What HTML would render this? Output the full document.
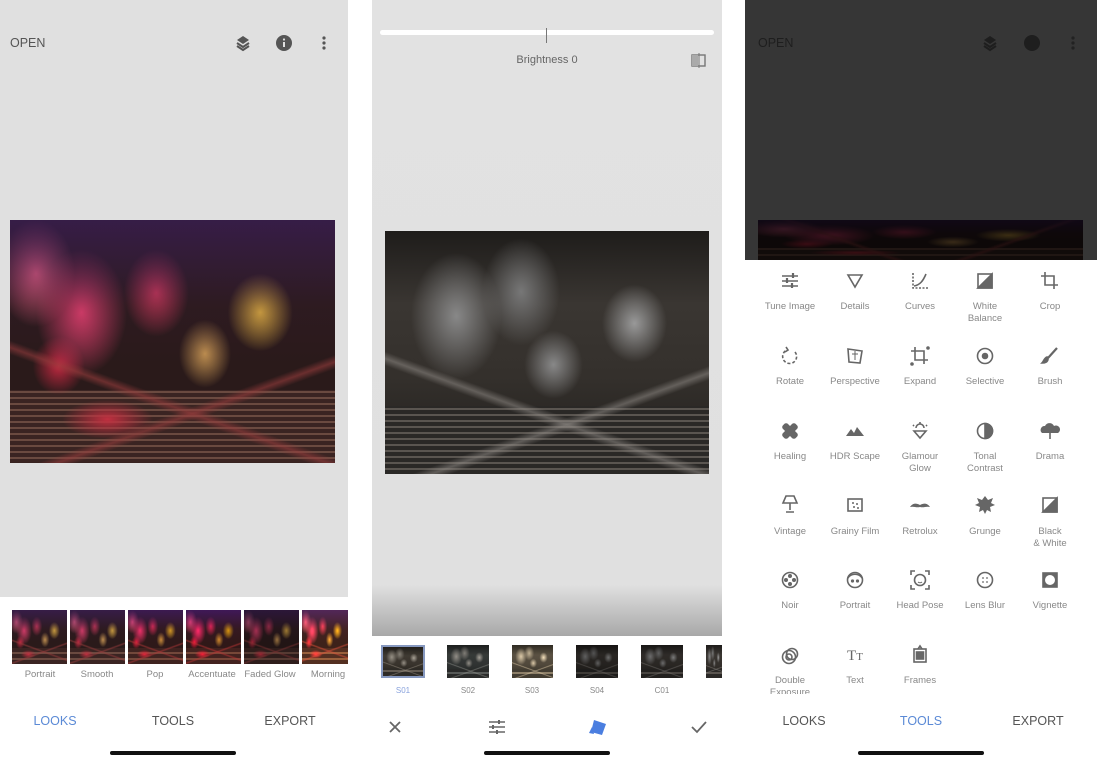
<!DOCTYPE html>
<html><head><meta charset="utf-8"><style>
*{margin:0;padding:0;box-sizing:border-box}
body{width:1097px;height:776px;background:#fff;position:relative;overflow:hidden;font-family:"Liberation Sans",sans-serif;color:#666}
.a{position:absolute}
.t{position:absolute;transform:translateX(-50%);white-space:nowrap;text-align:center}
.nav{font-size:12.5px;top:714px;color:#555}
.bar{position:absolute;height:4px;background:#111;border-radius:2px;top:751px}
.lbl{font-size:9.5px;color:#888;line-height:12px}
.photo{background:
 linear-gradient(160deg,rgba(0,0,0,0) 70%,rgba(150,60,60,.6) 72%,rgba(0,0,0,0) 74%),
 linear-gradient(20deg,rgba(0,0,0,0) 30%,rgba(150,60,60,.6) 32%,rgba(0,0,0,0) 34%),
 radial-gradient(ellipse 14% 26% at 22% 38%,#e8406e 0%,rgba(232,64,110,0) 100%),
 radial-gradient(ellipse 12% 22% at 8% 22%,#f06080 0%,rgba(240,96,128,0) 100%),
 radial-gradient(ellipse 10% 18% at 45% 30%,#d03858 0%,rgba(208,56,88,0) 100%),
 radial-gradient(ellipse 8% 12% at 15% 60%,#c02840 0%,rgba(192,40,64,0) 100%),
 radial-gradient(ellipse 10% 16% at 77% 38%,#e0b040 0%,rgba(224,176,64,0) 100%),
 radial-gradient(ellipse 8% 14% at 60% 55%,#c09050 0%,rgba(192,144,80,0) 100%),
 radial-gradient(ellipse 14% 8% at 30% 82%,#c03040 0%,rgba(192,48,64,0) 100%),
 repeating-linear-gradient(0deg,#3a2422 0 4px,#6a4a40 4px 6px),
 #2a1a1a;
 background-size:auto,auto,auto,auto,auto,auto,auto,auto,auto,100% 30%,auto;
 background-position:0 0,0 0,0 0,0 0,0 0,0 0,0 0,0 0,0 0,0 100%,0 0;
 background-repeat:no-repeat}
.photo::before{content:"";position:absolute;inset:0;background:linear-gradient(180deg,rgba(60,30,90,.7) 0%,rgba(60,30,60,.2) 35%,rgba(0,0,0,0) 60%)}
.bw{background:
 linear-gradient(160deg,rgba(0,0,0,0) 70%,rgba(150,145,140,.5) 72%,rgba(0,0,0,0) 74%),
 linear-gradient(20deg,rgba(0,0,0,0) 30%,rgba(150,145,140,.5) 32%,rgba(0,0,0,0) 34%),
 radial-gradient(ellipse 14% 26% at 22% 35%,#888 0%,rgba(136,136,136,0) 100%),
 radial-gradient(ellipse 12% 22% at 42% 25%,#777 0%,rgba(119,119,119,0) 100%),
 radial-gradient(ellipse 10% 16% at 77% 38%,#999 0%,rgba(153,153,153,0) 100%),
 radial-gradient(ellipse 9% 14% at 52% 55%,#888 0%,rgba(136,136,136,0) 100%),
 repeating-linear-gradient(0deg,#2a2826 0 4px,#5a5550 4px 6px),
 linear-gradient(180deg,#1e1c1a 0%,#3a3632 30%,#34302c 60%,#1e1c1a 100%);
 background-size:auto,auto,auto,auto,auto,auto,100% 28%,auto;
 background-position:0 0,0 0,0 0,0 0,0 0,0 0,0 100%,0 0;
 background-repeat:no-repeat}
</style></head><body>

<!-- PANEL 1 -->
<div class="a" style="left:0;top:0;width:348px;height:597px;background:#e0e0e0"></div>
<div class="a" style="left:10px;top:36px;font-size:12.5px;color:#555">OPEN</div>
<svg class="a" style="left:234px;top:34px" width="18" height="18" viewBox="0 0 18 18"><path d="M9 2l6 4-6 4-6-4z" fill="#555"/><path d="M3 9l6 4 6-4M3 12l6 4 6-4" stroke="#555" stroke-width="2" fill="none"/></svg>
<svg class="a" style="left:275px;top:34px" width="18" height="18"><circle cx="9" cy="9" r="8" fill="#555"/><rect x="8" y="8" width="2" height="5" fill="#e0e0e0"/><circle cx="9" cy="5.5" r="1.1" fill="#e0e0e0"/></svg>
<svg class="a" style="left:320px;top:35px" width="8" height="16"><circle cx="4" cy="3" r="1.6" fill="#555"/><circle cx="4" cy="8" r="1.6" fill="#555"/><circle cx="4" cy="13" r="1.6" fill="#555"/></svg>
<div class="a photo" style="left:10px;top:220px;width:325px;height:243px"></div>
<div class="a photo" style="left:12px;top:610px;width:55px;height:54px"></div>
<div class="a photo" style="left:70px;top:610px;width:55px;height:54px"></div>
<div class="a photo" style="left:128px;top:610px;width:55px;height:54px;filter:saturate(1.3)"></div>
<div class="a photo" style="left:186px;top:610px;width:55px;height:54px;filter:saturate(1.5)"></div>
<div class="a photo" style="left:244px;top:610px;width:55px;height:54px;filter:brightness(.8)"></div>
<div class="a photo" style="left:302px;top:610px;width:46px;height:54px;filter:sepia(.4) saturate(2) brightness(1.2)"></div>
<div class="t lbl" style="left:40px;top:669px">Portrait</div>
<div class="t lbl" style="left:97px;top:669px">Smooth</div>
<div class="t lbl" style="left:155px;top:669px">Pop</div>
<div class="t lbl" style="left:212px;top:669px">Accentuate</div>
<div class="t lbl" style="left:270px;top:669px">Faded Glow</div>
<div class="t lbl" style="left:328px;top:669px">Morning</div>
<div class="t nav" style="left:55px;color:#5b8ad6">LOOKS</div>
<div class="t nav" style="left:173px">TOOLS</div>
<div class="t nav" style="left:290px">EXPORT</div>
<div class="bar" style="left:110px;width:126px"></div>

<!-- PANEL 2 -->
<div class="a" style="left:372px;top:0;width:350px;height:636px;background:linear-gradient(180deg,#e2e2e2 0%,#e0e0e0 92%,#a8a8a8 100%)"></div>
<div class="a" style="left:380px;top:30px;width:334px;height:5px;background:#fff;border-radius:3px"></div>
<div class="a" style="left:546px;top:28px;width:1px;height:15px;background:#777"></div>
<div class="t" style="left:547px;top:54px;font-size:11px;color:#666">Brightness 0</div>
<svg class="a" style="left:690px;top:53px" width="18" height="15"><rect x="2" y="2" width="13" height="11" fill="none" stroke="#777" stroke-width="1.4"/><rect x="2" y="2" width="6" height="11" fill="#aaa"/><line x1="9" y1="0" x2="9" y2="15" stroke="#777"/></svg>
<div class="a bw" style="left:385px;top:231px;width:324px;height:243px"></div>
<div class="a bw" style="left:381px;top:645px;width:44px;height:33px;border:2px solid #6d8fd8;filter:sepia(.3)"></div>
<div class="a bw" style="left:447px;top:645px;width:42px;height:33px;filter:hue-rotate(160deg) sepia(.2)"></div>
<div class="a bw" style="left:512px;top:645px;width:41px;height:33px;filter:sepia(.7) brightness(1.3)"></div>
<div class="a bw" style="left:576px;top:645px;width:42px;height:33px;filter:brightness(.7)"></div>
<div class="a bw" style="left:641px;top:645px;width:42px;height:33px;filter:brightness(.8)"></div>
<div class="a bw" style="left:706px;top:645px;width:16px;height:33px"></div>
<div class="t lbl" style="left:403px;top:685px;font-size:8px;color:#8aa3dd">S01</div>
<div class="t lbl" style="left:468px;top:685px;font-size:8px">S02</div>
<div class="t lbl" style="left:532px;top:685px;font-size:8px">S03</div>
<div class="t lbl" style="left:597px;top:685px;font-size:8px">S04</div>
<div class="t lbl" style="left:662px;top:685px;font-size:8px">C01</div>
<svg class="a" style="left:388px;top:720px" width="14" height="14"><path d="M2 2L12 12M12 2L2 12" stroke="#666" stroke-width="1.8"/></svg>
<svg class="a" style="left:488px;top:719px" width="18" height="16"><path d="M1 3h16M1 8h16M1 13h16" stroke="#666" stroke-width="1.4"/><path d="M11 1v4M5 6v4M9 11v4" stroke="#666" stroke-width="2"/></svg>
<svg class="a" style="left:588px;top:718px" width="20" height="18"><path d="M6 2l12 4-4 11L3 14z" fill="#4a7ee0"/><path d="M1 15l3-6 2 7z" fill="#4a7ee0"/></svg>
<svg class="a" style="left:691px;top:720px" width="16" height="14"><path d="M1 7l5 5L15 2" stroke="#666" stroke-width="1.8" fill="none"/></svg>
<div class="bar" style="left:484px;width:126px"></div>

<!-- PANEL 3 -->
<div class="a" style="left:745px;top:0;width:352px;height:260px;background:#363636"></div>
<div class="a" style="left:758px;top:36px;font-size:12.5px;color:#1e1e1e">OPEN</div>
<svg class="a" style="left:981px;top:34px" width="18" height="18"><path d="M9 2l6 4-6 4-6-4z" fill="#1e1e1e"/><path d="M3 9l6 4 6-4M3 12l6 4 6-4" stroke="#1e1e1e" stroke-width="2" fill="none"/></svg>
<svg class="a" style="left:1023px;top:34px" width="18" height="18"><circle cx="9" cy="9" r="8" fill="#1e1e1e"/></svg>
<svg class="a" style="left:1069px;top:35px" width="8" height="16"><circle cx="4" cy="3" r="1.6" fill="#222"/><circle cx="4" cy="8" r="1.6" fill="#222"/><circle cx="4" cy="13" r="1.6" fill="#222"/></svg>
<div class="a photo" style="left:758px;top:220px;width:325px;height:40px;filter:brightness(.3)"></div>

<!-- tools grid -->
<svg class="a" style="left:745px;top:262px" width="352" height="440" viewBox="0 0 352 440" fill="none" stroke="#666" stroke-width="1.6">
 <g transform="translate(45,19)"><path d="M-8 -5h16M-8 0h16M-8 5h16"/><path d="M3 -8v5M-3 -3v5M2 2v5" stroke-width="2.2"/></g>
 <g transform="translate(110,19)"><path d="M-7 -6h14L0 6z"/></g>
 <g transform="translate(175,19)"><path d="M-7 -8v15h15" stroke-dasharray="2 1.5"/><path d="M-6 5C0 4 3 0 6 -7"/></g>
 <g transform="translate(240,19)"><rect x="-7" y="-7" width="14" height="14"/><path d="M-7 7L7 -7V7z" fill="#666"/></g>
 <g transform="translate(305,19)"><path d="M-5 -9v13h13M-9 -5h13v13"/></g>
 <g transform="translate(45,94)"><path d="M5 -4A7 7 0 1 1 -3 -6" stroke-dasharray="3 2"/><path d="M-4 -9l2 3-3 2" /></g>
 <g transform="translate(110,94)"><path d="M-7 -7L7 -5 5 7 -6 6z"/><path d="M-3 -2h6M0 -5v9" stroke-width="1"/></g>
 <g transform="translate(175,94)"><path d="M-5 -9v13h13M-9 -5h13v13"/><circle cx="-8" cy="8" r="1" fill="#666"/><circle cx="8" cy="-8" r="1" fill="#666"/></g>
 <g transform="translate(240,94)"><circle r="7.5"/><circle r="2.5" fill="#666"/></g>
 <g transform="translate(305,94)"><path d="M7 -8L-2 2" stroke-width="2.2"/><path d="M-3 1c-3 1-3 4-5 6 3 0 6-1 6-4z" fill="#666"/></g>
 <g transform="translate(45,169)" fill="#666" stroke="none"><rect x="-3.5" y="-9" width="7" height="18" rx="2.5" transform="rotate(45)"/><rect x="-3.5" y="-9" width="7" height="18" rx="2.5" transform="rotate(-45)"/></g>
 <g transform="translate(110,169)" fill="#666" stroke="none"><path d="M-9 5l5-7 3 4 3-6 7 9z"/></g>
 <g transform="translate(175,169)"><path d="M-6 0h12L0 7z"/><path d="M-4 -3a4 4 0 0 1 8 0M0 -9v2M-7 -6l1 1M7 -6l-1 1"/></g>
 <g transform="translate(240,169)"><circle r="7.5"/><path d="M0 -7.5A7.5 7.5 0 0 1 0 7.5z" fill="#666"/></g>
 <g transform="translate(305,169)" fill="#666" stroke="none"><path d="M-8 2a4 4 0 0 1 3-7 5 5 0 0 1 9 0 4 4 0 0 1 4 7z"/><rect x="-0.8" y="2" width="1.6" height="6"/></g>
 <g transform="translate(45,243)"><path d="M-4 -9h8l3 7h-14z"/><path d="M0 -2v7M-4 7h8"/></g>
 <g transform="translate(110,243)"><rect x="-7" y="-6" width="14" height="12"/><g fill="#666" stroke="none"><circle cx="-2" cy="-2" r="1"/><circle cx="2" cy="-1" r="1"/><circle cx="-1" cy="2" r="1"/><circle cx="3" cy="3" r="1"/></g></g>
 <g transform="translate(175,243)" fill="#666" stroke="none"><path d="M-10 2c3-4 6-4 10-2 4-2 7-2 10 2-4-1-6 1-10 0-4 1-6-1-10 0z"/></g>
 <g transform="translate(240,243)" fill="#666" stroke="none"><path d="M0 -9l3 4 5-2-2 5 4 2-5 2 1 5-4-2-2 4-2-4-4 2 1-5-5-2 4-2-2-5 5 2z"/></g>
 <g transform="translate(305,243)"><rect x="-7" y="-7" width="14" height="14"/><path d="M-7 7L7 -7V7z" fill="#666"/></g>
 <g transform="translate(45,318)"><circle r="7.5"/><g fill="#666" stroke="none"><circle cx="0" cy="-4" r="2"/><circle cx="0" cy="4" r="2"/><circle cx="-4" cy="0" r="2"/><circle cx="4" cy="0" r="2"/></g></g>
 <g transform="translate(110,318)"><circle r="7.5"/><path d="M-7 -2c3-5 11-5 14 0"/><circle cx="-2.5" cy="1" r="0.8" fill="#666"/><circle cx="2.5" cy="1" r="0.8" fill="#666"/></g>
 <g transform="translate(175,318)"><circle r="5.5"/><path d="M-9 -5v-4h4M5 -9h4v4M9 5v4h-4M-5 9h-4v-4"/><path d="M-2 2a3 3 0 0 0 4 0" stroke-width="1"/></g>
 <g transform="translate(240,318)"><circle r="7.5"/><g fill="#666" stroke="none"><circle cx="-2" cy="-2" r="0.9"/><circle cx="2" cy="-2" r="0.9"/><circle cx="-2" cy="2" r="0.9"/><circle cx="2" cy="2" r="0.9"/></g></g>
 <g transform="translate(305,318)"><rect x="-7" y="-7" width="14" height="14" fill="#666"/><circle r="5" fill="#fff" stroke="none"/></g>
 <g transform="translate(45,393)"><circle cx="-1" cy="2" r="6.5"/><circle cx="2" cy="-1" r="5.5"/><circle cx="-1" cy="2" r="3"/></g>
 <text x="110" y="398" font-family="Liberation Serif,serif" font-size="15" fill="#666" stroke="none" text-anchor="middle">T<tspan font-size="11">T</tspan></text>
 <g transform="translate(175,393)"><rect x="-6" y="-6" width="12" height="13"/><rect x="-3.5" y="-3" width="7" height="7" fill="#666"/><path d="M-2 -6l2-3 2 3"/></g>
</svg>
<div class="a" style="left:745px;top:262px;width:352px;height:440px;font-size:9.5px;color:#888;line-height:12px">
 <div class="t" style="left:45px;top:39px">Tune Image</div>
 <div class="t" style="left:110px;top:39px">Details</div>
 <div class="t" style="left:175px;top:39px">Curves</div>
 <div class="t" style="left:240px;top:39px">White<br>Balance</div>
 <div class="t" style="left:305px;top:39px">Crop</div>
 <div class="t" style="left:45px;top:114px">Rotate</div>
 <div class="t" style="left:110px;top:114px">Perspective</div>
 <div class="t" style="left:175px;top:114px">Expand</div>
 <div class="t" style="left:240px;top:114px">Selective</div>
 <div class="t" style="left:305px;top:114px">Brush</div>
 <div class="t" style="left:45px;top:189px">Healing</div>
 <div class="t" style="left:110px;top:189px">HDR Scape</div>
 <div class="t" style="left:175px;top:189px">Glamour<br>Glow</div>
 <div class="t" style="left:240px;top:189px">Tonal<br>Contrast</div>
 <div class="t" style="left:305px;top:189px">Drama</div>
 <div class="t" style="left:45px;top:264px">Vintage</div>
 <div class="t" style="left:110px;top:264px">Grainy Film</div>
 <div class="t" style="left:175px;top:264px">Retrolux</div>
 <div class="t" style="left:240px;top:264px">Grunge</div>
 <div class="t" style="left:305px;top:264px">Black<br>&amp; White</div>
 <div class="t" style="left:45px;top:338px">Noir</div>
 <div class="t" style="left:110px;top:338px">Portrait</div>
 <div class="t" style="left:175px;top:338px">Head Pose</div>
 <div class="t" style="left:240px;top:338px">Lens Blur</div>
 <div class="t" style="left:305px;top:338px">Vignette</div>
 <div class="t" style="left:45px;top:413px;height:19px;overflow:hidden">Double<br>Exposure</div>
 <div class="t" style="left:110px;top:413px">Text</div>
 <div class="t" style="left:175px;top:413px">Frames</div>
</div>
<div class="t nav" style="left:804px">LOOKS</div>
<div class="t nav" style="left:921px;color:#5b8ad6">TOOLS</div>
<div class="t nav" style="left:1038px">EXPORT</div>
<div class="bar" style="left:858px;width:126px"></div>
</body></html>
